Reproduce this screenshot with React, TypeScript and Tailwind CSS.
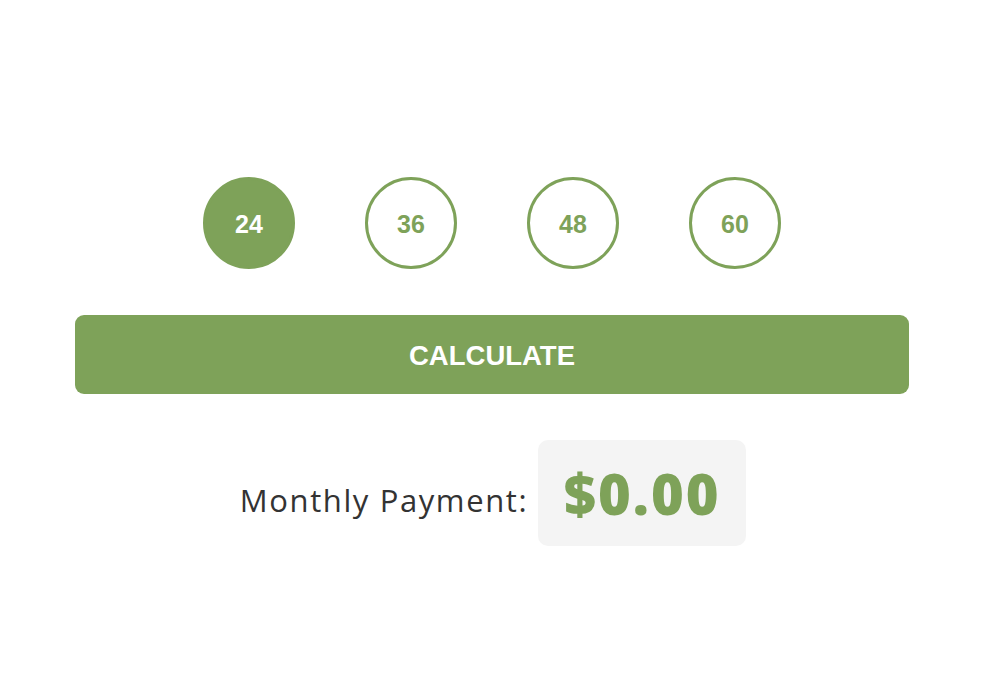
import { useState } from 'react';

const terms = [24, 36, 48, 60];

export default function App() {
  const [term, setTerm] = useState(24);

  return (
    <div className="min-h-[690px] w-[990px] bg-white font-['Liberation_Sans',Arial,sans-serif]">
      <div className="ml-[75px] flex w-[834px] flex-col items-center pt-[177px]">
        <div className="flex gap-[70px]">
          {terms.map(t => (
            <button
              key={t}
              onClick={() => setTerm(t)}
              className={`flex h-[92px] w-[92px] items-center justify-center rounded-full border-[3px] border-[#7ea259] pt-[3px] text-[25px] font-bold ${
                t === term ? 'bg-[#7ea259] text-white' : 'bg-white text-[#7ea259]'
              }`}
            >
              {t}
            </button>
          ))}
        </div>
        <button className="mt-[46px] h-[79px] w-full rounded-[9px] bg-[#7ea259] pt-[2px] text-[27.5px] font-bold text-white">
          CALCULATE
        </button>
        <div className="mt-[46px] ml-[2px] flex items-center gap-[10px]">
          <span className="pt-[14px] font-['Open_Sans',sans-serif] text-[31px] tracking-[1.6px] text-[#333333]">
            Monthly Payment:
          </span>
          <div className="flex h-[106px] w-[208px] items-center justify-center rounded-[10px] bg-[#f4f4f4]">
            <span className="font-['Open_Sans',sans-serif] text-[56px] font-extrabold tracking-[2px] text-[#7ea259]">
              $0.00
            </span>
          </div>
        </div>
      </div>
    </div>
  );
}
